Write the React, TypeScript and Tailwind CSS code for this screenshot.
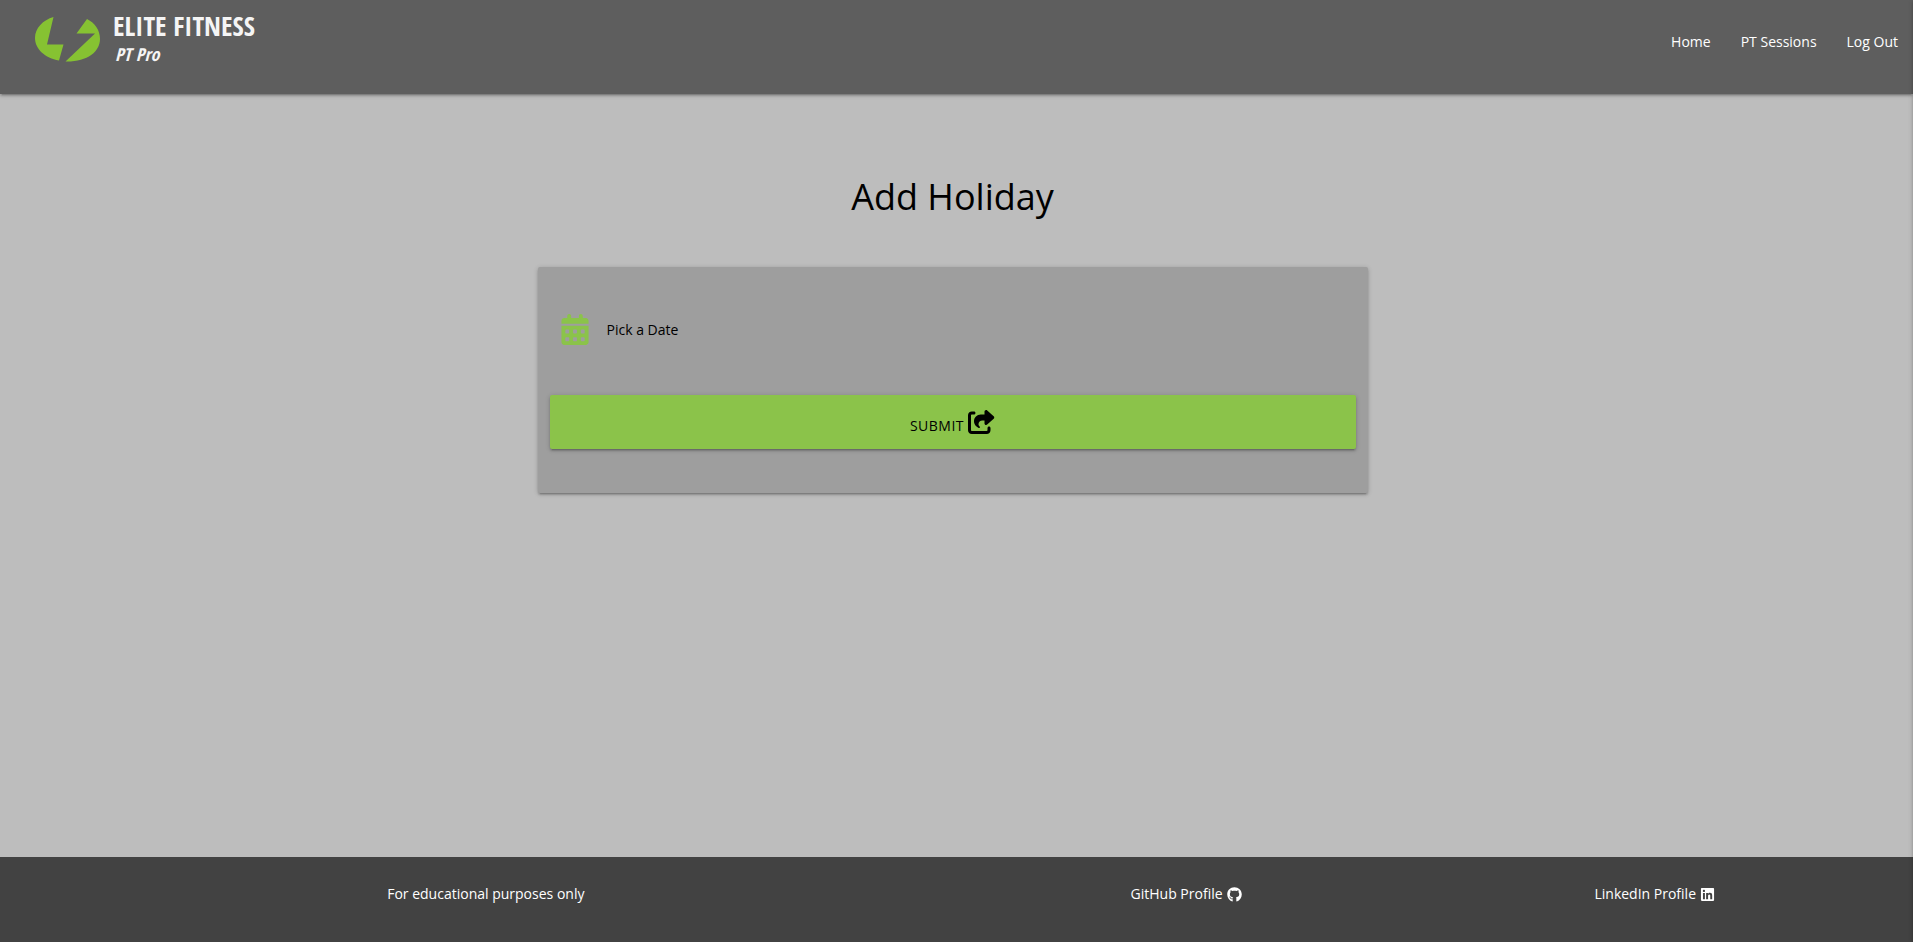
import React from "react";
import { FaGithub, FaLinkedin } from "react-icons/fa";
import { FaCalendarDays, FaShareFromSquare } from "react-icons/fa6";

const navLinks = ["Home", "PT Sessions", "Log Out"];

function Logo() {
  return (
    <a href="#home" className="flex gap-3 pt-3 pl-[35px] text-[#f5f5f5]">
      <svg viewBox="0 0 66 46" className="mt-1 h-[46px] w-[66px]" fill="#86c232" aria-hidden="true">
        <path d="M18.500 1C8 4 0 12 0 22C0 33 10 42 24 44.500L28.500 28.500H12Z" />
        <path d="M52 3L41.500 17.500H60L30.500 45.500C52 46 65 36 65 23C65 14 60 7 52 3Z" />
      </svg>
      <span className="flex flex-col font-['Open_Sans_Condensed','Liberation_Sans_Narrow',Roboto,sans-serif] font-bold">
        <span className="text-[27px] leading-7">ELITE FITNESS</span>
        <span className="pl-0.5 text-lg leading-7 italic">PT Pro</span>
      </span>
    </a>
  );
}

export default function App() {
  return (
    <div className="relative flex min-h-screen flex-col overflow-hidden bg-[#bdbdbd] font-['Open_Sans',sans-serif] text-sm text-black">
      <header className="z-10 flex h-[94px] items-start justify-between bg-[#5e5e5e] shadow-[0_2px_2px_0_rgba(0,0,0,0.14),0_3px_1px_-2px_rgba(0,0,0,0.12),0_1px_5px_0_rgba(0,0,0,0.2)]">
        <Logo />
        <nav className="flex text-white">
          {navLinks.map((label) => (
            <a key={label} href="#nav" className="px-[15px] pt-[10px] leading-[64px]">
              {label}
            </a>
          ))}
        </nav>
      </header>

      <main className="flex grow flex-col items-center pt-20 pr-2">
        <h1 className="text-4xl leading-[46px] font-normal">Add Holiday</h1>
        <form
          className="mt-[47px] w-[830px] max-w-full rounded-[2px] bg-[#9e9e9e] px-3 pt-[42px] pb-11 shadow-[0_2px_2px_0_rgba(0,0,0,0.14),0_3px_1px_-2px_rgba(0,0,0,0.12),0_1px_5px_0_rgba(0,0,0,0.2)]"
          onSubmit={(e) => e.preventDefault()}
        >
          <div className="flex h-10 items-center gap-[18px] pl-[11px]">
            <FaCalendarDays className="h-[31px] w-7 text-[#8bc34a]" aria-hidden="true" />
            <input
              type="text"
              aria-label="Pick a Date"
              placeholder="Pick a Date"
              className="h-10 grow bg-transparent outline-none placeholder:text-black placeholder:opacity-100"
            />
          </div>
          <button
            type="submit"
            className="mt-[46px] flex h-[54px] w-full items-center justify-center gap-1 rounded-[2px] bg-[#8bc34a] tracking-[0.5px] shadow-[0_2px_2px_0_rgba(0,0,0,0.14),0_3px_1px_-2px_rgba(0,0,0,0.12),0_1px_5px_0_rgba(0,0,0,0.2)]"
          >
            <span className="pt-2">SUBMIT</span>
            <FaShareFromSquare className="h-6 w-[27px]" aria-hidden="true" />
          </button>
        </form>
      </main>

      <footer className="flex h-[85px] bg-[#424242] pt-[27px] text-white">
        <p className="w-[51%] pr-1 text-center leading-5">For educational purposes only</p>
        <div className="w-[22%] text-center">
          <a href="#github" className="inline-flex items-center gap-1 leading-5">
            GitHub Profile <FaGithub className="size-[15px]" />
          </a>
        </div>
        <div className="w-[27%] text-center">
          <a href="#linkedin" className="inline-flex items-center gap-1 leading-5">
            LinkedIn Profile <FaLinkedin className="size-[15px]" />
          </a>
        </div>
      </footer>

      <aside
        aria-hidden="true"
        className="pointer-events-none absolute inset-y-0 left-full z-20 w-72 shadow-[0_2px_2px_0_rgba(0,0,0,0.14),0_3px_1px_-2px_rgba(0,0,0,0.12),0_1px_5px_0_rgba(0,0,0,0.2)]"
      />
    </div>
  );
}
